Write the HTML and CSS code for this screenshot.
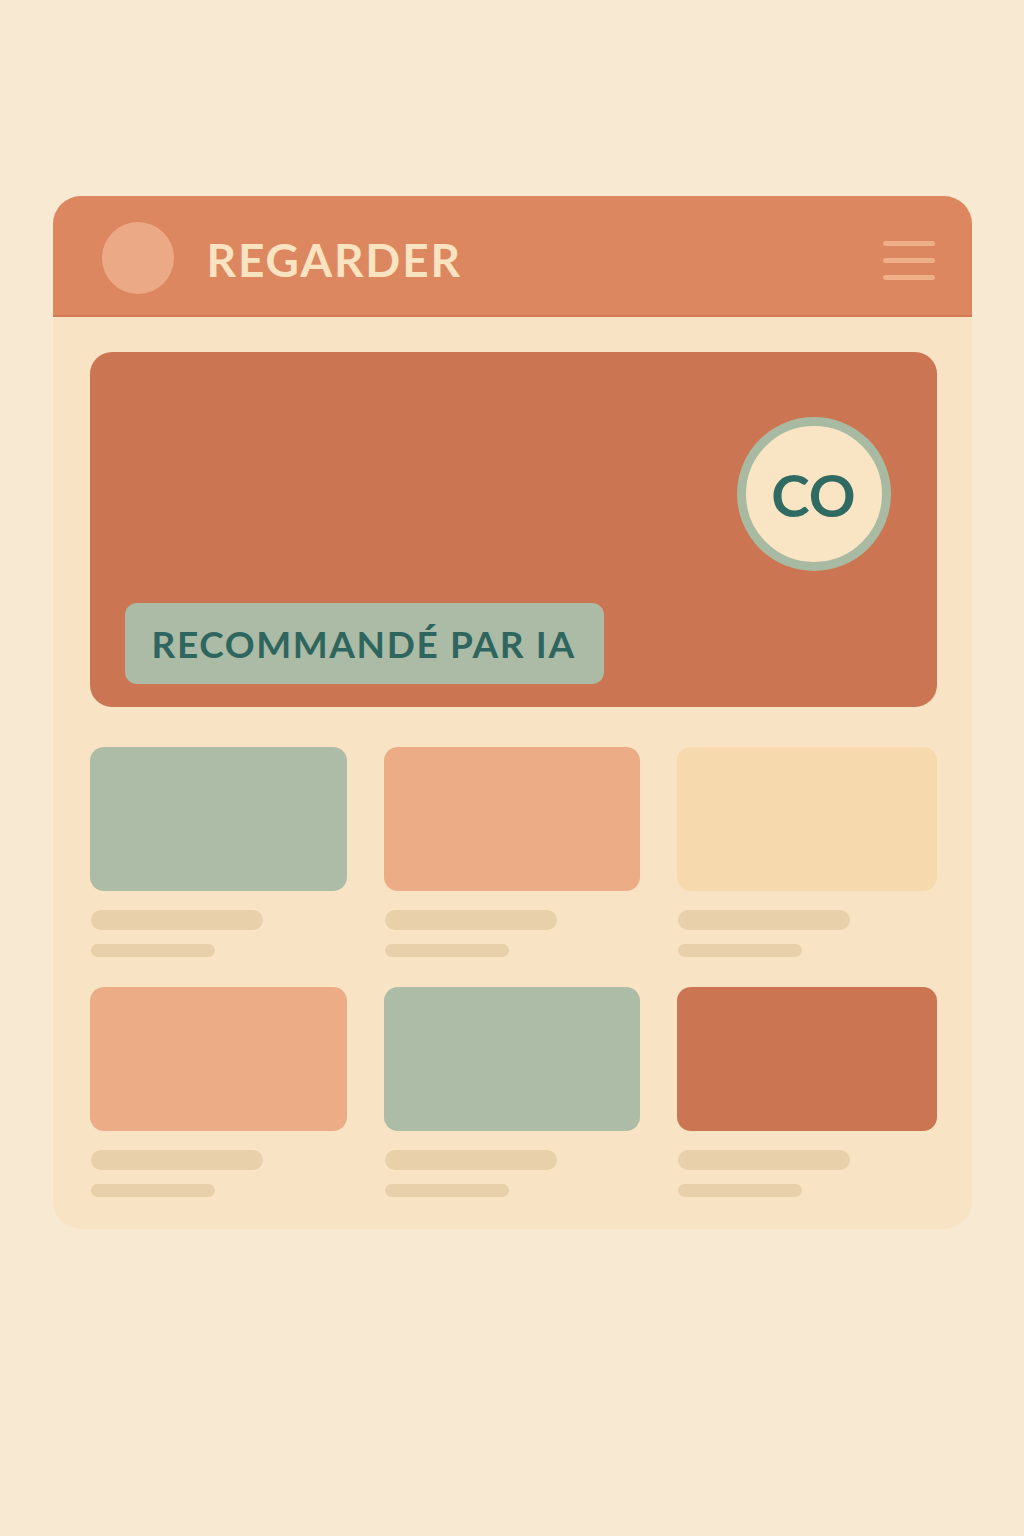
FILE: index.html
```html
<!DOCTYPE html>
<html lang="fr">
<head>
    <meta charset="UTF-8">
    <meta name="viewport" content="width=device-width, initial-scale=1.0">
    <title>Regarder</title>
    <link rel="stylesheet" href="styles.css">
</head>
<body>
    <div class="app">
        <header class="top-bar">
            <div class="avatar"></div>
            <h1 class="brand">REGARDER</h1>
            <div class="menu">
                <span></span>
                <span></span>
                <span></span>
            </div>
        </header>

        <main class="content">
            <section class="hero">
                <div class="hero-badge">CO</div>
                <div class="hero-label">RECOMMANDÉ PAR IA</div>
            </section>

            <div class="grid">
                <div class="item">
                    <div class="thumb sage"></div>
                    <div class="line long"></div>
                    <div class="line short"></div>
                </div>
                <div class="item">
                    <div class="thumb peach"></div>
                    <div class="line long"></div>
                    <div class="line short"></div>
                </div>
                <div class="item">
                    <div class="thumb sand"></div>
                    <div class="line long"></div>
                    <div class="line short"></div>
                </div>
                <div class="item">
                    <div class="thumb peach"></div>
                    <div class="line long"></div>
                    <div class="line short"></div>
                </div>
                <div class="item">
                    <div class="thumb sage"></div>
                    <div class="line long"></div>
                    <div class="line short"></div>
                </div>
                <div class="item">
                    <div class="thumb clay"></div>
                    <div class="line long"></div>
                    <div class="line short"></div>
                </div>
            </div>
        </main>
    </div>
</body>
</html>
```

FILE: styles.css
```css
body {
    margin: 0;
    background-color: #f8e9d2;
    font-family: Lato, "Open Sans", sans-serif;
}

.app {
    width: 919px;
    margin: 196px auto 0;
    background-color: #f8e3c4;
    border-radius: 28px;
    overflow: hidden;
}

/* header */
.top-bar {
    height: 121px;
    display: flex;
    align-items: center;
    padding: 4px 37px 0 49px;
    background-color: #dc875f;
    border-bottom: 2px solid #d47a55;
    box-sizing: border-box;
}

.avatar {
    width: 72px;
    height: 72px;
    border-radius: 50%;
    background-color: #eca985;
    flex-shrink: 0;
}

.brand {
    margin: 4px 0 0 33px;
    flex: 1;
    font-size: 46px;
    font-weight: 700;
    letter-spacing: 1.8px;
    color: #f9e3c0;
    line-height: 1;
}

.menu {
    display: flex;
    flex-direction: column;
    gap: 12px;
    width: 52px;
    margin-top: 6px;
}

.menu span {
    height: 5px;
    border-radius: 3px;
    background-color: #efb087;
}

/* content */
.content {
    padding: 35px 35px 32px 37px;
}

.hero {
    height: 355px;
    box-sizing: border-box;
    padding: 65px 46px 23px 35px;
    display: flex;
    flex-direction: column;
    justify-content: space-between;
    align-items: flex-start;
    background-color: #cc7552;
    border-radius: 22px;
}

.hero-badge {
    align-self: flex-end;
    width: 154px;
    height: 154px;
    box-sizing: border-box;
    border: 9px solid #a9baa2;
    border-radius: 50%;
    background-color: #f9e5c3;
    display: flex;
    align-items: center;
    justify-content: center;
    font-size: 58px;
    font-weight: 700;
    color: #2f6b62;
}

.hero-label {
    height: 81px;
    display: flex;
    align-items: center;
    padding: 0 28px 0 27px;
    background-color: #abbba5;
    border-radius: 12px;
    font-size: 37px;
    font-weight: 700;
    letter-spacing: 1.6px;
    color: #2e665f;
}

.grid {
    margin-top: 40px;
    display: grid;
    grid-template-columns: 257px 256px 260px;
    column-gap: 37px;
    row-gap: 30px;
}

.thumb {
    height: 144px;
    border-radius: 14px;
    margin-bottom: 19px;
}

.sage { background-color: #adbca7; }
.peach { background-color: #ebac86; }
.sand { background-color: #f6d9ac; }
.clay { background-color: #cc7552; }

.line {
    background-color: #e8d0aa;
    border-radius: 10px;
    margin-left: 1px;
}

.line.long {
    width: 172px;
    height: 20px;
    margin-bottom: 14px;
}

.line.short {
    width: 124px;
    height: 13px;
}
```
